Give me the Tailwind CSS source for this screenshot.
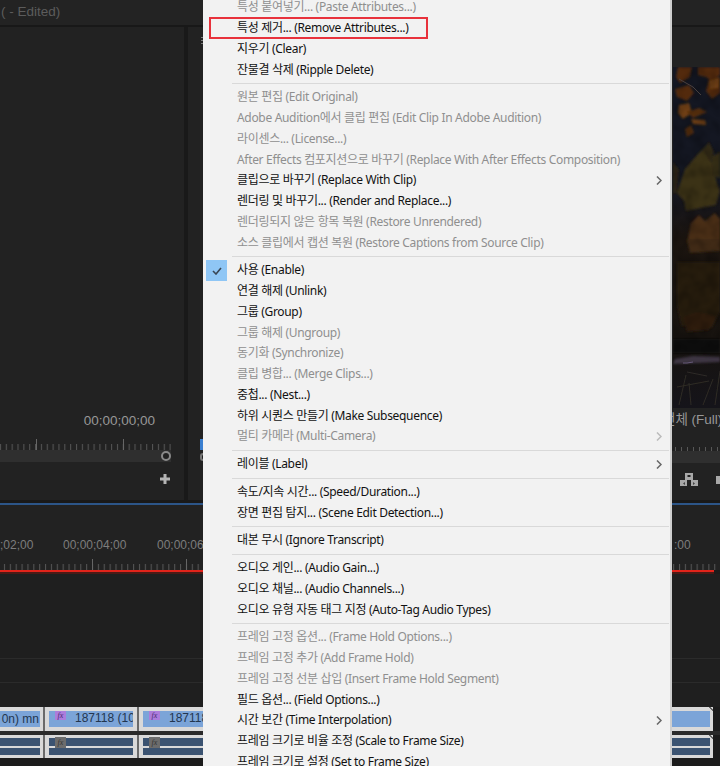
<!DOCTYPE html>
<html><head><meta charset="utf-8"><script src="https://cdn.jsdelivr.net/npm/@tailwindcss/browser@4"></script></head>
<body class="m-0">
<div class="relative w-[720px] h-[766px] overflow-hidden bg-[#1c1c1c] font-['Liberation_Sans','Noto_Sans_CJK_KR',sans-serif]">
  <!-- title -->
  <div class="h-[27px] bg-[#232323] border-b-2 border-[#181818] pl-px flex items-center text-[13.5px] text-[#5c5c5c]">( - Edited)</div>
  <!-- panels -->
  <div class="h-[473px] flex">
    <div class="w-[184px] bg-[#222222] flex flex-col items-start">
      <div class="h-[404px] w-full flex items-end justify-end pr-[29px] text-[13.5px] text-[#979797]">00;00;00;00</div>
      <svg class="mt-[8px]" width="184" height="46" viewBox="0 0 184 46">
        <defs><pattern id="t" width="5.85" height="11" patternUnits="userSpaceOnUse" x="-3"><rect x="3" y="5" width="1" height="6" fill="#575757"/></pattern></defs>
        <rect width="171" height="11" fill="url(#t)"/>
        <rect x="36" y="0" width="1" height="11" fill="#666"/><rect x="123" y="0" width="1" height="11" fill="#666"/>
        <rect y="11" width="171" height="12" fill="#2f2f2f"/>
        <circle cx="166" cy="17" r="4" fill="#222" stroke="#8a8a8a" stroke-width="2"/>
        <path d="M160 40h10M165 35v10" stroke="#b5b5b5" stroke-width="3"/>
      </svg>
    </div>
    <div class="w-[4px] bg-[#191919]"></div>
    <div class="flex-1 bg-[#222222] flex flex-col items-end">
      <div class="w-[47px] h-[40px] shrink-0"></div>
      <svg width="47" height="341" viewBox="0 0 47 341" class="shrink-0">
        <defs>
          <linearGradient id="g" x1="0" y1="0" x2="0" y2="1"><stop offset="0" stop-color="#141722"/><stop offset=".35" stop-color="#141722"/><stop offset=".5" stop-color="#1c1510"/><stop offset=".8" stop-color="#17130f"/><stop offset="1" stop-color="#15141a"/></linearGradient>
          <filter id="b" x="-10%" y="-10%" width="120%" height="120%"><feGaussianBlur stdDeviation="1.2"/></filter>
          <filter id="b2" x="-10%" y="-10%" width="120%" height="120%"><feGaussianBlur stdDeviation="0.5"/></filter>
          <filter id="n" x="0" y="0" width="100%" height="100%"><feTurbulence type="fractalNoise" baseFrequency="0.09" numOctaves="2" seed="4"/><feColorMatrix values="0 0 0 0 0  0 0 0 0 0  0 0 0 0 0  0 0 0 1.6 -0.6"/><feGaussianBlur stdDeviation="1"/></filter>
        </defs>
        <rect width="47" height="341" fill="url(#g)"/>
        <g filter="url(#b)">
          <g fill="#522a0f"><path d="M5 0h14l-2 10-10 6-4-6z"/><path d="M25 0h22v8l-8 6-6-4-8-2z"/><path d="M2 22l14-4 5 8-7 8-10-4z"/><path d="M36 12l11-2v16l-8 6-6-8z"/></g>
          <g fill="#6f4012"><path d="M6 38l10-2 3 10-9 6-5-6z"/><path d="M36 14l9-3v10l-8 1z"/><path d="M18 52l14 1 1 5-13-1z"/></g>
          <g fill="#542d10"><path d="M14 45l12-4 8 4-14 6z"/><path d="M12 62l6-4 3 8-7 4z"/></g>
          <path d="M4 126l8-24 12-14 8-8 7 16 5 20 3 8-4 14-30 6-2-10z" fill="#3b3016"/>
          <path d="M30 82l6-7 5 10-4 10z" fill="#332a15"/>
          <path d="M38 90l9-5v26l-7-2z" fill="#362d16"/>
          <path d="M0 95l6 8-2 22-4 2z" fill="#2a2313"/>
          <path d="M14 176l4-20 8-8 6 6 10-8 5 6v24z" fill="#4a2f15"/>
          <path d="M14 172h33v12l-30 2z" fill="#3f2a13"/>
          <path d="M4 195h43v50l-8 16-31-2-4-20z" fill="#261a0f"/>
          <path d="M10 250l14-5 20 4-8 14-22 2z" fill="#2f1f0e"/>
          <path d="M0 272h47v14H0z" fill="#0e0e11"/>
          <path d="M2 292l18-3 27 1v5l-22 1-25 1z" fill="#3d3543"/>
        </g>
        <rect width="47" height="288" filter="url(#n)" opacity=".35"/>
        <g filter="url(#b2)" fill="none" stroke-width="1">
          <path d="M6 12l14 8 8 8" stroke="#4a3f3e"/>
          <path d="M10 296l4 0 6-1" stroke="#665a78"/>
          <g stroke="#2e2b25"><path d="M6 338l7-30"/><path d="M18 338l-2-22"/><path d="M30 338l10-26"/><path d="M42 338l5-34"/><path d="M4 320l32-6"/><path d="M14 305l20 4"/></g>
        </g>
      </svg>
      <div class="w-[57px] h-[92px] shrink-0 flex flex-col text-[13.5px] text-[#979797]">
        <div class="h-[24px] flex items-center whitespace-nowrap overflow-hidden">전체 (Full)</div>
        <div class="h-[4px] mt-[15px] bg-[repeating-linear-gradient(90deg,#575757_0_1px,transparent_1px_6px)]"></div>
        <div class="h-[12px] bg-[#2f2f2f]"></div>
        <div class="flex items-center gap-[18px] pl-[17px] mt-[10px]">
          <svg width="18" height="13" viewBox="0 0 18 13" class="shrink-0"><path d="M5 0h8v7H5zM0 7h7v6H0zM11 7h7v6h-7z" fill="#a8a8a8"/><path d="M7.500 2h3v2h-3z" fill="#222"/><path d="M5 9l-2 1.500 2 1.500zM13 9l2 1.500-2 1.500z" fill="#444"/></svg>
          <div class="w-[8px] h-[8px] bg-[#a8a8a8] shrink-0"></div>
        </div>
      </div>
    </div>
  </div>
  <!-- blue line -->
  <div class="h-[3px] bg-[#191919]"></div>
  <div class="h-[2px] bg-[#2c5588]"></div>
  <!-- timeline -->
  <div class="h-[65px] bg-[#222222] flex flex-col">
    <div class="flex h-[54px] shrink-0 items-end pb-[5px] text-[12px] text-[#7d7d7d] whitespace-nowrap">
      <span class="w-[30px] text-right">;02;00</span>
      <span class="ml-[33px] w-[61px]">00;00;04;00</span>
      <span class="ml-[33px] w-[46px] overflow-hidden">00;00;06</span>
      <span class="ml-[471px]">:00</span>
    </div>
    <svg width="720" height="11" viewBox="0 0 720 11" class="shrink-0">
      <defs><pattern id="t2" width="5.87" height="11" patternUnits="userSpaceOnUse" x="1"><rect x="3" y="5" width="1" height="6" fill="#575757"/></pattern></defs>
      <rect width="720" height="11" fill="url(#t2)"/>
      <rect x="92" y="0" width="1" height="11" fill="#666"/><rect x="186" y="0" width="1" height="11" fill="#666"/>
    </svg>
  </div>
  <div class="h-[2px] w-[714px] bg-[#e2231a]"></div>
  <div class="h-[2px] w-[714px] bg-[#4a1a16]"></div>
  <div class="h-[85px] bg-[#1f1f1f] border-b border-[#2b2b2b]"></div>
  <div class="h-[24px] bg-[#1f1f1f] border-b border-[#2b2b2b]"></div>
  <div class="h-[24px] bg-[#1f1f1f]"></div>
  <!-- video clips -->
  <div class="h-[24px] flex items-stretch text-[12px] text-[#23364f]">
    <div class="w-[45px] shrink-0 bg-[#d9d9d9] border-r-2 border-[#6a6a6a] py-[4px] pr-[3px]"><div class="h-full bg-[#7ba4d8] flex items-center justify-end pr-[1px] whitespace-nowrap overflow-hidden">0n) mn</div></div>
    <div class="w-[94px] shrink-0 bg-[#d9d9d9] border-r-2 border-[#6a6a6a] py-[4px] px-[4px]"><div class="h-full bg-[#7ba4d8] flex items-start whitespace-nowrap overflow-hidden pl-[6px] gap-[9px]"><span class="w-[11px] h-[9px] bg-[#ac7cdc] text-[8px] leading-[9px] italic text-[#4d2a72] text-center shrink-0 font-['Liberation_Serif',serif]">fx</span><span class="leading-[15px]">187118 (10</span></div></div>
    <div class="w-[94px] shrink-0 bg-[#d9d9d9] py-[4px] px-[4px]"><div class="h-full bg-[#7ba4d8] flex items-start whitespace-nowrap overflow-hidden pl-[6px] gap-[9px]"><span class="w-[11px] h-[9px] bg-[#ac7cdc] text-[8px] leading-[9px] italic text-[#4d2a72] text-center shrink-0 font-['Liberation_Serif',serif]">fx</span><span class="leading-[15px]">187118 (10</span></div></div>
    <div class="relative w-[480px] shrink-0 bg-[#d9d9d9] py-[4px] pr-[3px]"><div class="h-full bg-[#7ba4d8]"></div><span class="absolute right-0 top-0 w-[4px] h-[4px] bg-[linear-gradient(45deg,transparent_40%,#666_40%_70%,transparent_70%)]"></span></div>
  </div>
  <div class="h-[4px] bg-[#2a2a2a]"></div>
  <!-- audio clips -->
  <div class="h-[23px] flex items-stretch">
    <div class="w-[45px] shrink-0 bg-[#d9d9d9] border-r-2 border-[#6a6a6a] py-[3px] pr-[3px] flex flex-col gap-[2px]"><div class="flex-1 bg-[#3b5371]"></div><div class="flex-1 bg-[#3b5371]"></div></div>
    <div class="relative w-[94px] shrink-0 bg-[#d9d9d9] border-r-2 border-[#6a6a6a] py-[3px] px-[4px] flex flex-col gap-[2px]"><div class="flex-1 bg-[#3b5371]"></div><div class="flex-1 bg-[#3b5371]"></div><span class="absolute left-[10px] top-[2px] w-[11px] h-[11px] bg-[#6c6c6c] text-[8px] leading-[11px] italic text-[#333] text-center font-['Liberation_Serif',serif]">fx</span></div>
    <div class="relative w-[94px] shrink-0 bg-[#d9d9d9] py-[3px] px-[4px] flex flex-col gap-[2px]"><div class="flex-1 bg-[#3b5371]"></div><div class="flex-1 bg-[#3b5371]"></div><span class="absolute left-[10px] top-[2px] w-[11px] h-[11px] bg-[#6c6c6c] text-[8px] leading-[11px] italic text-[#333] text-center font-['Liberation_Serif',serif]">fx</span></div>
    <div class="relative w-[480px] shrink-0 bg-[#d9d9d9] py-[3px] pr-[3px] flex flex-col gap-[2px]"><div class="flex-1 bg-[#3b5371]"></div><div class="flex-1 bg-[#3b5371]"></div><span class="absolute right-0 top-0 w-[4px] h-[4px] bg-[linear-gradient(45deg,transparent_40%,#666_40%_70%,transparent_70%)]"></span></div>
  </div>

  <!-- small marks showing at the menu's left edge -->
  <div class="absolute left-[201px] top-[37px] w-[2px] h-[9px] bg-[repeating-linear-gradient(180deg,#7a7a7a_0_1px,transparent_1px_3px)]"></div>
  <div class="absolute left-[200px] top-[439px] w-[3px] h-[11px] bg-[#3b7fd0]"></div>
  <div class="absolute left-[200px] top-[453px] w-[3px] h-[8px] rounded-l-full border-2 border-r-0 border-[#777]"></div>

  <!-- overlay: context menu -->
  <div class="absolute left-[203px] top-[-2.9px] w-[469px] bg-[#f2f2f2] border-r-[2px] border-[#cfcfcf] text-[12px] text-[#111] font-['Noto_Sans','Noto_Sans_CJK_KR',sans-serif] tracking-[-0.32px] [&>div]:h-[20.75px] [&>div]:flex [&>div]:items-center [&>div]:pl-[34px] [&>div]:whitespace-nowrap [&>hr]:h-[1px] [&>hr]:my-[3px] [&>hr]:ml-[29px] [&>hr]:mr-[1px] [&>hr]:bg-[#d9d9d9] [&>hr]:border-0">
    <div class="text-[#8f8f8f]">특성 붙여넣기... (Paste Attributes...)</div>
    <div>특성 제거... (Remove Attributes...)</div>
    <div>지우기 (Clear)</div>
    <div>잔물결 삭제 (Ripple Delete)</div>
    <hr>
    <div class="text-[#8f8f8f]">원본 편집 (Edit Original)</div>
    <div class="text-[#8f8f8f]">Adobe Audition에서 클립 편집 (Edit Clip In Adobe Audition)</div>
    <div class="text-[#8f8f8f]">라이센스... (License...)</div>
    <div class="text-[#8f8f8f]">After Effects 컴포지션으로 바꾸기 (Replace With After Effects Composition)</div>
    <div class="justify-between pr-[8px]"><span>클립으로 바꾸기 (Replace With Clip)</span><svg width="6" height="9" viewBox="0 0 6 9"><path d="M1 .5l4 4-4 4" fill="none" stroke="#666" stroke-width="1.5"/></svg></div>
    <div>렌더링 및 바꾸기... (Render and Replace...)</div>
    <div class="text-[#8f8f8f]">렌더링되지 않은 항목 복원 (Restore Unrendered)</div>
    <div class="text-[#8f8f8f]">소스 클립에서 캡션 복원 (Restore Captions from Source Clip)</div>
    <hr>
    <div class="relative">사용 (Enable)<span class="absolute left-[3px] top-0 w-[21px] h-[21px] bg-[#8fc6f5] flex items-center justify-center"><svg width="10" height="8" viewBox="0 0 10 8"><path d="M1 4l3 3 5-6" fill="none" stroke="#3a4654" stroke-width="1.6"/></svg></span></div>
    <div>연결 해제 (Unlink)</div>
    <div>그룹 (Group)</div>
    <div class="text-[#8f8f8f]">그룹 해제 (Ungroup)</div>
    <div class="text-[#8f8f8f]">동기화 (Synchronize)</div>
    <div class="text-[#8f8f8f]">클립 병합... (Merge Clips...)</div>
    <div>중첩... (Nest...)</div>
    <div>하위 시퀀스 만들기 (Make Subsequence)</div>
    <div class="justify-between pr-[8px] text-[#8f8f8f]"><span>멀티 카메라 (Multi-Camera)</span><svg width="6" height="9" viewBox="0 0 6 9"><path d="M1 .5l4 4-4 4" fill="none" stroke="#bbb" stroke-width="1.5"/></svg></div>
    <hr>
    <div class="justify-between pr-[8px]"><span>레이블 (Label)</span><svg width="6" height="9" viewBox="0 0 6 9"><path d="M1 .5l4 4-4 4" fill="none" stroke="#666" stroke-width="1.5"/></svg></div>
    <hr>
    <div>속도/지속 시간... (Speed/Duration...)</div>
    <div>장면 편집 탐지... (Scene Edit Detection...)</div>
    <hr>
    <div>대본 무시 (Ignore Transcript)</div>
    <hr>
    <div>오디오 게인... (Audio Gain...)</div>
    <div>오디오 채널... (Audio Channels...)</div>
    <div>오디오 유형 자동 태그 지정 (Auto-Tag Audio Types)</div>
    <hr>
    <div class="text-[#8f8f8f]">프레임 고정 옵션... (Frame Hold Options...)</div>
    <div class="text-[#8f8f8f]">프레임 고정 추가 (Add Frame Hold)</div>
    <div class="text-[#8f8f8f]">프레임 고정 선분 삽입 (Insert Frame Hold Segment)</div>
    <div>필드 옵션... (Field Options...)</div>
    <div class="justify-between pr-[8px]"><span>시간 보간 (Time Interpolation)</span><svg width="6" height="9" viewBox="0 0 6 9"><path d="M1 .5l4 4-4 4" fill="none" stroke="#666" stroke-width="1.5"/></svg></div>
    <div>프레임 크기로 비율 조정 (Scale to Frame Size)</div>
    <div>프레임 크기로 설정 (Set to Frame Size)</div>
  </div>
  <!-- red annotation -->
  <div class="absolute left-[209px] top-[17px] w-[219px] h-[22px] border-2 border-[#e8323c]"></div>
</div>
</body></html>
